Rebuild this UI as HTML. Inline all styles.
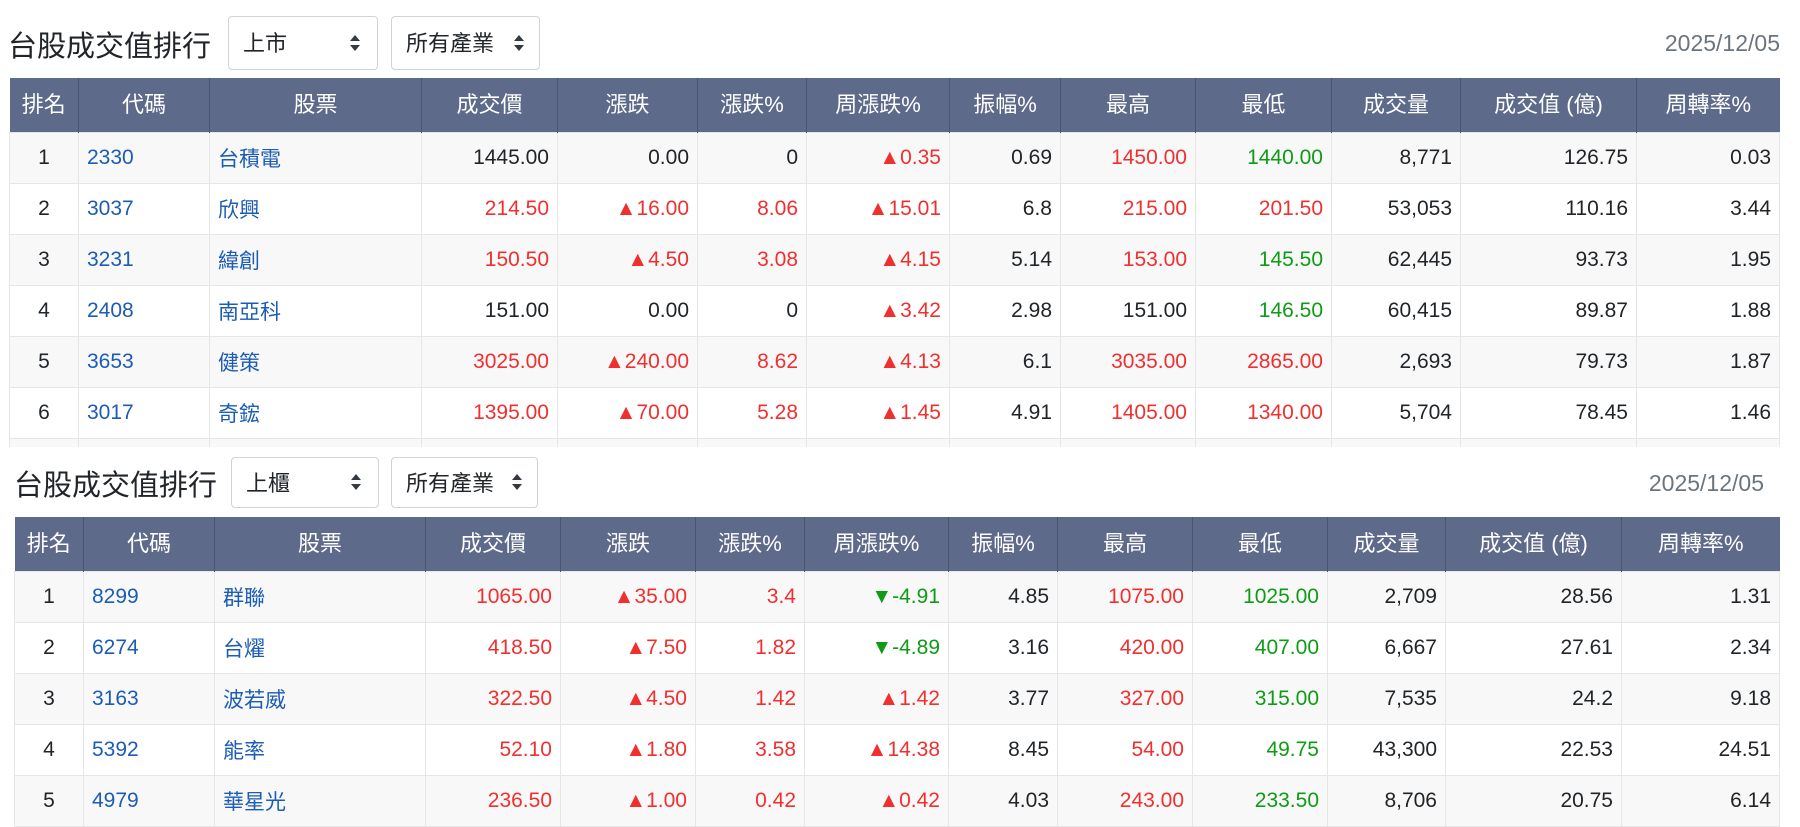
<!DOCTYPE html>
<html><head><meta charset="utf-8">
<style>
*{box-sizing:border-box;margin:0;padding:0}
body{width:1800px;height:821px;overflow:hidden;background:#fff;font-family:"Liberation Sans","Noto Sans CJK TC",sans-serif;color:#212529;position:relative}
.title{position:absolute;font-size:29px;line-height:36px;color:#212529;white-space:nowrap;font-family:"Noto Sans CJK TC",sans-serif}
.sel{position:absolute;border:1px solid #ced4da;border-radius:4px;font-size:22px;line-height:50px;padding-left:14px;color:#212529;background:#fff;font-family:"Noto Sans CJK TC",sans-serif}
.sel svg{position:absolute;right:16px;top:17px}
.date{position:absolute;font-size:23px;color:#6c757d;line-height:28px}
.wrap{position:absolute;overflow:hidden}
table{border-collapse:collapse;table-layout:fixed;font-size:21px}
th{background:#5e6a8a;color:#fff;font-weight:normal;height:54px;border-left:1px solid #4a5573;text-align:center;padding:0 4px;white-space:nowrap;font-size:22px;line-height:26px}
th:first-child{border-left:none}
td{height:51px;border:1px solid #e6e6e6;padding:0 8px;text-align:right;white-space:nowrap;line-height:24px}
td:nth-child(1){text-align:center}
td:nth-child(2),td:nth-child(3){text-align:left;color:#1c5cb5}
td:nth-child(3){font-family:"Noto Sans CJK TC",sans-serif}
tr:nth-child(even) td{background:#f8f8f8}
.r{color:#f0302f}.g{color:#0e9c16}
</style></head><body>

<div class="title" style="left:8px;top:26px">台股成交值排行</div>
<div class="sel" style="left:228px;top:16px;width:150px;height:54px">上市<svg width="12" height="18" viewBox="0 0 12 18"><path d="M6 1 L11 7 H1Z M6 17 L11 11 H1Z" fill="#343a40"/></svg></div>
<div class="sel" style="left:391px;top:16px;width:149px;height:54px">所有產業<svg width="12" height="18" viewBox="0 0 12 18" style="right:14px"><path d="M6 1 L11 7 H1Z M6 17 L11 11 H1Z" fill="#343a40"/></svg></div>
<div class="date" style="right:20px;top:29px">2025/12/05</div>

<div class="wrap" style="left:9px;top:78px;width:1771px;height:369px">
<table style="width:1770px">
<colgroup><col style="width:69px"><col style="width:131px"><col style="width:212px"><col style="width:136px"><col style="width:140px"><col style="width:109px"><col style="width:143px"><col style="width:111px"><col style="width:135px"><col style="width:136px"><col style="width:129px"><col style="width:176px"><col style="width:143px"></colgroup>
<tr><th>排名</th><th>代碼</th><th>股票</th><th>成交價</th><th>漲跌</th><th>漲跌%</th><th>周漲跌%</th><th>振幅%</th><th>最高</th><th>最低</th><th>成交量</th><th>成交值 (億)</th><th>周轉率%</th></tr>
<tr><td>1</td><td>2330</td><td>台積電</td><td>1445.00</td><td>0.00</td><td>0</td><td class="r">▲0.35</td><td>0.69</td><td class="r">1450.00</td><td class="g">1440.00</td><td>8,771</td><td>126.75</td><td>0.03</td></tr>
<tr><td>2</td><td>3037</td><td>欣興</td><td class="r">214.50</td><td class="r">▲16.00</td><td class="r">8.06</td><td class="r">▲15.01</td><td>6.8</td><td class="r">215.00</td><td class="r">201.50</td><td>53,053</td><td>110.16</td><td>3.44</td></tr>
<tr><td>3</td><td>3231</td><td>緯創</td><td class="r">150.50</td><td class="r">▲4.50</td><td class="r">3.08</td><td class="r">▲4.15</td><td>5.14</td><td class="r">153.00</td><td class="g">145.50</td><td>62,445</td><td>93.73</td><td>1.95</td></tr>
<tr><td>4</td><td>2408</td><td>南亞科</td><td>151.00</td><td>0.00</td><td>0</td><td class="r">▲3.42</td><td>2.98</td><td>151.00</td><td class="g">146.50</td><td>60,415</td><td>89.87</td><td>1.88</td></tr>
<tr><td>5</td><td>3653</td><td>健策</td><td class="r">3025.00</td><td class="r">▲240.00</td><td class="r">8.62</td><td class="r">▲4.13</td><td>6.1</td><td class="r">3035.00</td><td class="r">2865.00</td><td>2,693</td><td>79.73</td><td>1.87</td></tr>
<tr><td>6</td><td>3017</td><td>奇鋐</td><td class="r">1395.00</td><td class="r">▲70.00</td><td class="r">5.28</td><td class="r">▲1.45</td><td>4.91</td><td class="r">1405.00</td><td class="r">1340.00</td><td>5,704</td><td>78.45</td><td>1.46</td></tr>
<tr><td></td><td></td><td></td><td></td><td></td><td></td><td></td><td></td><td></td><td></td><td></td><td></td><td></td></tr>
</table></div>

<div class="title" style="left:14px;top:465px">台股成交值排行</div>
<div class="sel" style="left:231px;top:457px;width:148px;height:51px;line-height:48px">上櫃<svg width="12" height="18" viewBox="0 0 12 18" style="top:15px"><path d="M6 1 L11 7 H1Z M6 17 L11 11 H1Z" fill="#343a40"/></svg></div>
<div class="sel" style="left:391px;top:457px;width:147px;height:51px;line-height:48px">所有產業<svg width="12" height="18" viewBox="0 0 12 18" style="right:14px;top:15px"><path d="M6 1 L11 7 H1Z M6 17 L11 11 H1Z" fill="#343a40"/></svg></div>
<div class="date" style="right:36px;top:469px">2025/12/05</div>

<div class="wrap" style="left:14px;top:517px;width:1766px;height:310px">
<table style="width:1765px">
<colgroup><col style="width:69px"><col style="width:131px"><col style="width:211px"><col style="width:135px"><col style="width:135px"><col style="width:109px"><col style="width:144px"><col style="width:109px"><col style="width:135px"><col style="width:135px"><col style="width:118px"><col style="width:176px"><col style="width:158px"></colgroup>
<tr><th>排名</th><th>代碼</th><th>股票</th><th>成交價</th><th>漲跌</th><th>漲跌%</th><th>周漲跌%</th><th>振幅%</th><th>最高</th><th>最低</th><th>成交量</th><th>成交值 (億)</th><th>周轉率%</th></tr>
<tr><td>1</td><td>8299</td><td>群聯</td><td class="r">1065.00</td><td class="r">▲35.00</td><td class="r">3.4</td><td class="g">▼-4.91</td><td>4.85</td><td class="r">1075.00</td><td class="g">1025.00</td><td>2,709</td><td>28.56</td><td>1.31</td></tr>
<tr><td>2</td><td>6274</td><td>台燿</td><td class="r">418.50</td><td class="r">▲7.50</td><td class="r">1.82</td><td class="g">▼-4.89</td><td>3.16</td><td class="r">420.00</td><td class="g">407.00</td><td>6,667</td><td>27.61</td><td>2.34</td></tr>
<tr><td>3</td><td>3163</td><td>波若威</td><td class="r">322.50</td><td class="r">▲4.50</td><td class="r">1.42</td><td class="r">▲1.42</td><td>3.77</td><td class="r">327.00</td><td class="g">315.00</td><td>7,535</td><td>24.2</td><td>9.18</td></tr>
<tr><td>4</td><td>5392</td><td>能率</td><td class="r">52.10</td><td class="r">▲1.80</td><td class="r">3.58</td><td class="r">▲14.38</td><td>8.45</td><td class="r">54.00</td><td class="g">49.75</td><td>43,300</td><td>22.53</td><td>24.51</td></tr>
<tr><td>5</td><td>4979</td><td>華星光</td><td class="r">236.50</td><td class="r">▲1.00</td><td class="r">0.42</td><td class="r">▲0.42</td><td>4.03</td><td class="r">243.00</td><td class="g">233.50</td><td>8,706</td><td>20.75</td><td>6.14</td></tr>
</table></div>
</body></html>
